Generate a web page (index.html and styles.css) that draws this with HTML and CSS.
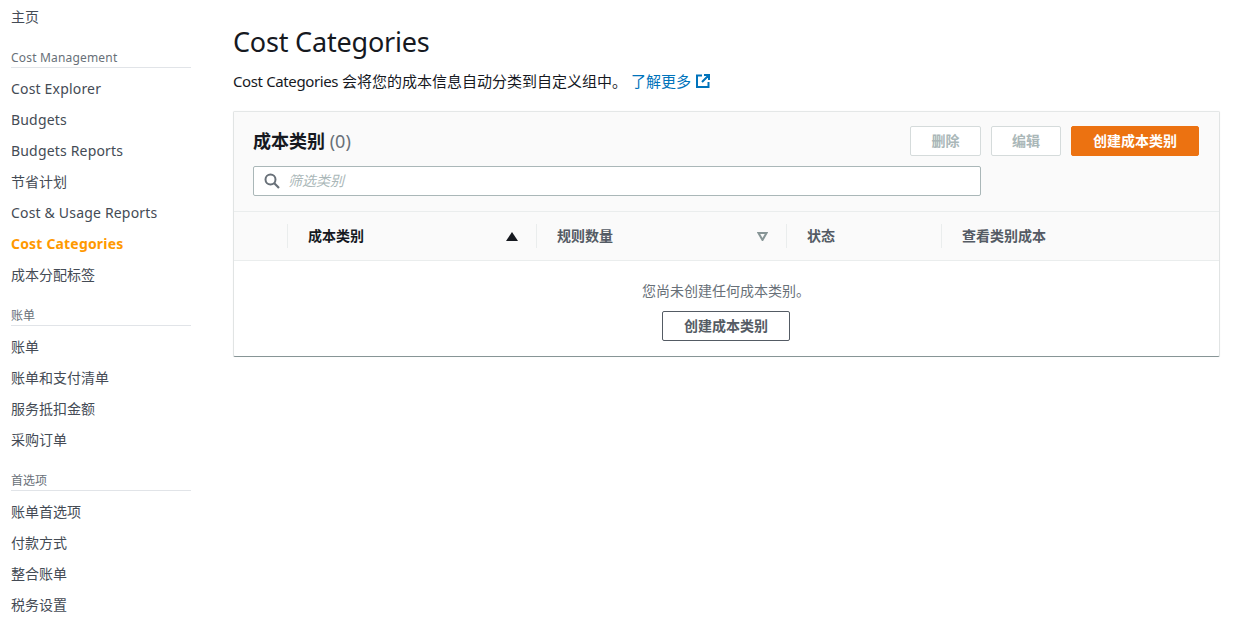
FILE: index.html
```html
<!DOCTYPE html>
<html lang="zh-CN">
<head>
<meta charset="utf-8">
<title>Cost Categories</title>
<link rel="stylesheet" href="styles.css">
</head>
<body>
<div class="page">
  <nav class="sidebar">
    <a class="nav-item home">主页</a>
    <div class="nav-title lat">Cost Management</div>
    <a class="nav-item lat">Cost Explorer</a>
    <a class="nav-item lat">Budgets</a>
    <a class="nav-item lat">Budgets Reports</a>
    <a class="nav-item">节省计划</a>
    <a class="nav-item lat">Cost &amp; Usage Reports</a>
    <a class="nav-item active lat">Cost Categories</a>
    <a class="nav-item">成本分配标签</a>
    <div class="nav-title">账单</div>
    <a class="nav-item">账单</a>
    <a class="nav-item">账单和支付清单</a>
    <a class="nav-item">服务抵扣金额</a>
    <a class="nav-item">采购订单</a>
    <div class="nav-title">首选项</div>
    <a class="nav-item">账单首选项</a>
    <a class="nav-item">付款方式</a>
    <a class="nav-item">整合账单</a>
    <a class="nav-item">税务设置</a>
  </nav>
  <main class="main">
    <h1 class="page-title">Cost Categories</h1>
    <p class="intro"><span class="intro-lat">Cost Categories</span> 会将您的成本信息自动分类到自定义组中。 <a class="learn">了解更多<svg class="ext" width="14" height="14" viewBox="0 0 14 14"><path d="M6 1.500H1v11.500h11.500V8M8 1h5v5M13 1L6 8" fill="none" stroke="#0073bb" stroke-width="2"/></svg></a></p>
    <section class="card">
      <header class="card-head">
        <div class="card-top">
          <h2 class="card-title">成本类别 <span class="count">(0)</span></h2>
          <div class="actions">
            <button class="btn disabled wide">删除</button>
            <button class="btn disabled">编辑</button>
            <button class="btn primary">创建成本类别</button>
          </div>
        </div>
        <div class="filter">
          <svg class="search" width="16" height="16" viewBox="0 0 16 16"><circle cx="6.500" cy="6.500" r="5" fill="none" stroke="#687078" stroke-width="2"/><path d="M10.300 10.300L15 15" stroke="#687078" stroke-width="2.200"/></svg>
          <span class="placeholder">筛选类别</span>
        </div>
      </header>
      <div class="columns">
        <div class="col col-check"></div>
        <div class="col col-name"><span>成本类别</span><svg width="12" height="9" viewBox="0 0 12 9"><path d="M6 0l6 9H0z" fill="#16191f"/></svg></div>
        <div class="col col-rules"><span>规则数量</span><svg width="11" height="9" viewBox="0 0 11 9"><path d="M1.500 1h8L5.500 8z" fill="none" stroke="#879596" stroke-width="2"/></svg></div>
        <div class="col col-status"><span>状态</span></div>
        <div class="col col-view"><span>查看类别成本</span></div>
      </div>
      <div class="empty">
        <p class="empty-text">您尚未创建任何成本类别。</p>
        <button class="btn outline">创建成本类别</button>
      </div>
    </section>
  </main>
</div>
</body>
</html>
```
FILE: styles.css
```css
* { box-sizing: border-box; }
html, body { margin: 0; padding: 0; background: #fff; }
body {
  font-family: "Noto Sans", "Noto Sans CJK SC", sans-serif;
  font-size: 14px;
  color: #16191f;
  height: 629px;
  overflow: hidden;
}
.page { display: flex; align-items: flex-start; }
.sidebar {
  width: 233px;
  flex: none;
  padding: 1px 42px 0 11px;
  display: flex;
  flex-direction: column;
}
.lat { letter-spacing: .18px; }
.nav-item {
  display: block;
  height: 31px;
  line-height: 31px;
  color: #444b55;
  white-space: nowrap;
}
.nav-item.active { color: #ff9900; font-weight: 700; }
.nav-title {
  height: 25px;
  margin-top: 11px;
  padding-top: 6px;
  line-height: 18px;
  font-size: 12px;
  color: #687078;
  border-bottom: 1px solid #e1e4e8;
  margin-bottom: 5px;
}
.main { flex: 1; padding: 0 20px 0 0; min-width: 0; }
.page-title {
  margin: 24px 0 0;
  font-size: 27px;
  letter-spacing: -.2px;
  line-height: 36px;
  font-weight: 400;
  color: #16191f;
}
.intro { margin: 10px 0 0; font-size: 15px; line-height: 22px; height: 22px; color: #16191f; white-space: nowrap; }
.intro-lat { letter-spacing: -.38px; }
.learn { color: #0073bb; }
.ext { margin-left: 5px; vertical-align: -1px; }
.card {
  margin-top: 19px;
  background: #fff;
  border: 1px solid #e1e4e4;
  border-top-color: #e4e7e7;
  border-bottom: 1px solid #879596;
  border-radius: 2px;
  box-shadow: 0 0 1px rgba(0,0,0,.1);
}
.card-head {
  height: 100px;
  padding: 14px 20px 0 19px;
  background: #fafafa;
  border-bottom: 1px solid #eaeded;
}
.card-top { display: flex; justify-content: space-between; align-items: center; height: 30px; }
.card-title { margin: 0; font-size: 18px; font-weight: 700; line-height: 30px; color: #16191f; }
.count { font-weight: 400; color: #687078; }
.actions { display: flex; gap: 10px; }
.btn {
  font: 700 14px/20px "Noto Sans", "Noto Sans CJK SC", sans-serif;
  height: 30px;
  border-radius: 2px;
  padding: 0;
  width: 70px;
  background: #fff;
  border: 1px solid #545b64;
  color: #545b64;
}
.btn.wide { width: 71px; }
.btn.disabled { border-color: #d5dbdb; color: #aab7b8; }
.btn.primary { background: #ec7211; border-color: #ec7211; color: #fff; width: 128px; }
.btn.outline { width: 128px; }
.filter {
  width: 728px;
  height: 30px;
  margin-top: 10px;
  display: flex;
  align-items: center;
  padding-left: 10px;
  background: #fff;
  border: 1px solid #aab7b8;
  border-radius: 2px;
}
.search { flex: none; }
.placeholder { margin-left: 8px; font-size: 14px; line-height: 26px; font-style: italic; color: #aab7b8; }
.columns {
  display: flex;
  align-items: center;
  height: 49px;
  background: #fafafa;
  border-bottom: 1px solid #eaeded;
  font-weight: 700;
  font-size: 14px;
  color: #545b64;
}
.col {
  height: 24px;
  line-height: 24px;
  padding: 0 18px 0 20px;
  display: flex;
  align-items: center;
  justify-content: space-between;
  border-left: 1px solid #eaeded;
  flex: none;
}
.col-check { width: 53px; border-left: 0; }
.col-name { width: 249px; color: #16191f; }
.col-rules { width: 250px; }
.col-status { width: 155px; }
.col-view { flex: 1; }
.empty { height: 95px; text-align: center; padding: 19px 1px 0 0; }
.empty-text { margin: 0 0 9px; line-height: 22px; font-size: 14px; color: #687078; }
```
